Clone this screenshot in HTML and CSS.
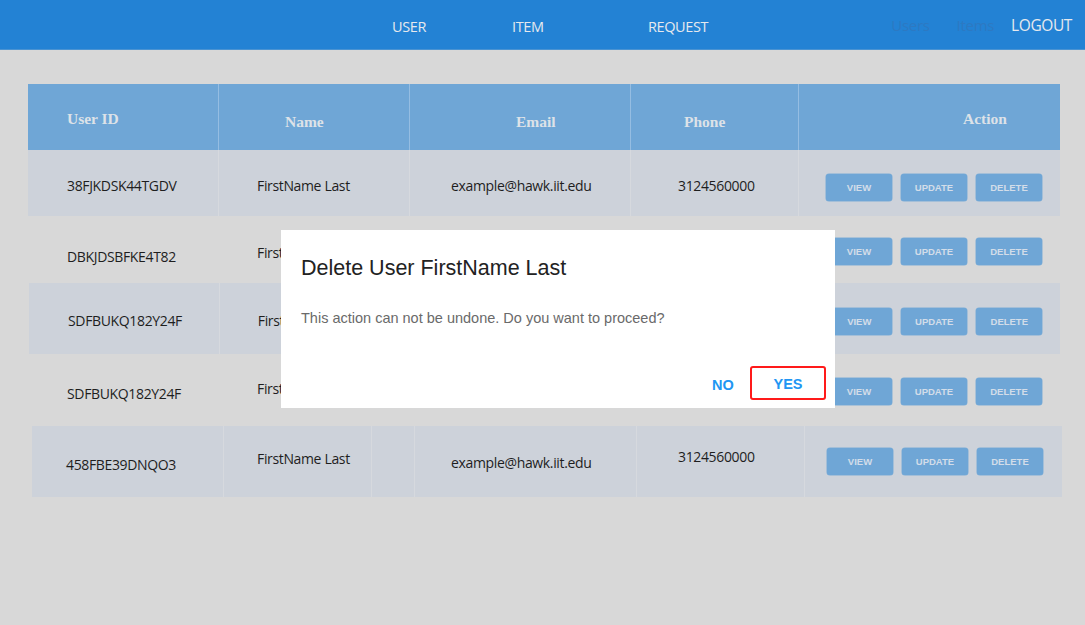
FILE: index.html
```html
<!DOCTYPE html>
<html>
<head>
<meta charset="utf-8">
<link rel="stylesheet" href="styles.css">
</head>
<body>
<header class="navbar">
  <nav class="main-nav">
    <a class="nav-link n-user">USER</a>
    <a class="nav-link n-item">ITEM</a>
    <a class="nav-link n-request">REQUEST</a>
  </nav>
  <div class="side-nav">
    <a class="dim-link">Users</a>
    <a class="dim-link">Items</a>
    <a class="logout">LOGOUT</a>
  </div>
</header>

<main class="content">
  <div class="table">
    <div class="row head">
      <div class="cell c1 th th-up">User ID</div>
      <div class="cell c2 th">Name</div>
      <div class="cell c3 th">Email</div>
      <div class="cell c4 th">Phone</div>
      <div class="cell c5 th th-up">Action</div>
    </div>

    <div class="row striped r1">
      <div class="cell c1 td">38FJKDSK44TGDV</div>
      <div class="cell c2 td">FirstName Last</div>
      <div class="cell c3 td">example@hawk.iit.edu</div>
      <div class="cell c4 td">3124560000</div>
      <div class="cell c5 actions"><button class="btn">VIEW</button><button class="btn">UPDATE</button><button class="btn">DELETE</button></div>
    </div>

    <div class="row plain r2">
      <div class="cell c1 td">DBKJDSBFKE4T82</div>
      <div class="cell c2 td up">FirstName Last</div>
      <div class="cell c3 td">example@hawk.iit.edu</div>
      <div class="cell c4 td">3124560000</div>
      <div class="cell c5 actions"><button class="btn">VIEW</button><button class="btn">UPDATE</button><button class="btn">DELETE</button></div>
    </div>

    <div class="row striped r3">
      <div class="cell c1 td">SDFBUKQ182Y24F</div>
      <div class="cell c2 td">FirstName Last</div>
      <div class="cell c3 td">example@hawk.iit.edu</div>
      <div class="cell c4 td">3124560000</div>
      <div class="cell c5 actions"><button class="btn">VIEW</button><button class="btn">UPDATE</button><button class="btn">DELETE</button></div>
    </div>

    <div class="row plain r4">
      <div class="cell c1 td">SDFBUKQ182Y24F</div>
      <div class="cell c2 td up">FirstName Last</div>
      <div class="cell c3 td">example@hawk.iit.edu</div>
      <div class="cell c4 td">3124560000</div>
      <div class="cell c5 actions"><button class="btn">VIEW</button><button class="btn">UPDATE</button><button class="btn">DELETE</button></div>
    </div>

    <div class="row striped r5">
      <div class="cell c1 td">458FBE39DNQO3</div>
      <div class="cell c2a td up">FirstName Last</div>
      <div class="cell c2b"></div>
      <div class="cell c3b td">example@hawk.iit.edu</div>
      <div class="cell c4 td up">3124560000</div>
      <div class="cell c5 actions"><button class="btn">VIEW</button><button class="btn">UPDATE</button><button class="btn">DELETE</button></div>
    </div>
  </div>
</main>

<div class="dialog">
  <h2 class="dialog-title">Delete User FirstName Last</h2>
  <p class="dialog-text">This action can not be undone. Do you want to proceed?</p>
  <div class="dialog-actions">
    <button class="dlg-btn no">NO</button>
    <button class="dlg-btn yes">YES</button>
  </div>
</div>
</body>
</html>
```

FILE: styles.css
```css
* { box-sizing: border-box; }

html, body {
  margin: 0;
  padding: 0;
  background: #d8d8d8;
  width: 1085px;
  height: 625px;
  overflow: hidden;
  font-family: "Open Sans", "Noto Sans", sans-serif;
}

.navbar {
  height: 50px;
  background: #2382d4;
  border-bottom: 1px solid #4a93d2;
  display: flex;
  align-items: center;
}

.main-nav {
  display: flex;
  align-items: center;
  padding-left: 392px;
  padding-top: 3px;
}

.nav-link {
  color: #e6e9ee;
  font-size: 14.5px;
  letter-spacing: -0.4px;
}
.n-user { width: 120px; }
.n-item { width: 136px; }
.n-request { width: 80px; }

.side-nav {
  margin-left: auto;
  display: flex;
  align-items: center;
  padding-right: 13px;
}

.dim-link {
  color: #2d79c2;
  font-size: 15px;
  letter-spacing: -0.3px;
  margin-right: 27px;
}
.dim-link + .dim-link { margin-right: 17px; }

.logout {
  color: #e6e9ee;
  font-size: 15.5px;
  letter-spacing: -0.4px;
}

.content {
  padding: 34px 0 0 28px;
}

.table {
  width: 1032px;
}

.row {
  display: flex;
}

.cell {
  display: flex;
  align-items: center;
  border-right: 1px solid #d6d9de;
}
.cell:last-child { border-right: none; }

.c1 { width: 191px; padding-left: 39px; }
.c2 { width: 191px; padding-left: 38px; }
.c3 { width: 221px; padding-left: 41px; }
.c4 { width: 168px; padding-left: 47px; }
.c5 { width: 261px; padding-left: 27px; }

.head {
  height: 66px;
  background: #6fa6d6;
}
.head .cell { border-right: 1px solid #95bde2; }
.head .cell:last-child { border-right: none; }

.th {
  font-family: "Liberation Serif", "Times New Roman", serif;
  font-weight: bold;
  font-size: 15.5px;
  color: #dde2e8;
  padding-top: 10px;
}
.th-up { padding-top: 4px; }
.head .c2 { padding-left: 66px; }
.head .c3 { padding-left: 106px; }
.head .c4 { padding-left: 53px; }
.head .c5 { padding-left: 164px; }

.striped { background: #cdd2da; }
.plain { background: transparent; }
.plain .cell { border-right-color: transparent; }

.r1 { height: 66px; }
.r2 { height: 67px; }
.r3 { height: 71px; margin-left: 1px; width: 1031px; }
.r4 { height: 72px; }
.r5 { height: 71px; margin-left: 4px; width: 1030px; }

.td {
  font-size: 14px;
  color: #1e1e1e;
  padding-top: 4px;
  letter-spacing: -0.35px;
}

.r2 .td { padding-top: 14px; }
.r2 .td.up { padding-top: 6px; }
.r4 .td { padding-top: 6px; }
.r4 .td.up { padding-top: 0; padding-bottom: 4px; }

.r5 .c1 { width: 192px; padding-left: 34px; }
.r5 .td { padding-top: 6px; }
.r5 .c2a { width: 148px; padding-left: 33px; padding-top: 0; padding-bottom: 6px; }
.r5 .c2b { width: 43px; }
.r5 .c3b { width: 222px; padding-left: 36px; padding-top: 2px; }
.r5 .c4 { width: 168px; padding-left: 41px; padding-top: 0; padding-bottom: 10px; }
.r5 .c5 { width: 257px; padding-left: 22px; }

.actions {
  gap: 9px;
  padding-top: 8px;
}
.r2 .actions { padding-top: 3px; }
.r3 .actions { padding-top: 5px; }
.r4 .actions { padding-top: 2px; }
.r5 .actions { padding-top: 0; }

.btn {
  width: 66px;
  height: 27px;
  border: none;
  border-radius: 3px;
  background: #6fa6d6;
  color: #d3dde9;
  font-family: "Liberation Sans", Arial, sans-serif;
  font-weight: bold;
  font-size: 9.5px;
  padding: 0;
  box-shadow: 0 0 0 0.5px #7cacd6;
}

.dialog {
  position: absolute;
  left: 281px;
  top: 230px;
  width: 554px;
  height: 178px;
  background: #ffffff;
  padding: 25px 20px 0 20px;
  display: flex;
  flex-direction: column;
  font-family: "Liberation Sans", Arial, sans-serif;
}

.dialog-title {
  margin: 0;
  font-weight: normal;
  font-size: 21.5px;
  color: #222222;
  line-height: 26px;
}

.dialog-text {
  margin: 0;
  margin-top: 28px;
  font-size: 14.5px;
  color: #6a6a6a;
  line-height: 18px;
}

.dialog-actions {
  display: flex;
  justify-content: flex-end;
  align-items: center;
  margin-top: auto;
  margin-bottom: 8px;
  margin-right: -11px;
  gap: 12px;
}

.dlg-btn {
  background: none;
  border: none;
  font-family: "Liberation Sans", Arial, sans-serif;
  font-weight: bold;
  font-size: 14.5px;
  color: #2196f3;
  padding: 0;
}

.no { width: 26px; text-align: left; padding-top: 3px; }

.yes {
  width: 76px;
  height: 34px;
  border: 2px solid #ff1a1a;
  border-radius: 3px;
  padding-top: 2px;
}
```
